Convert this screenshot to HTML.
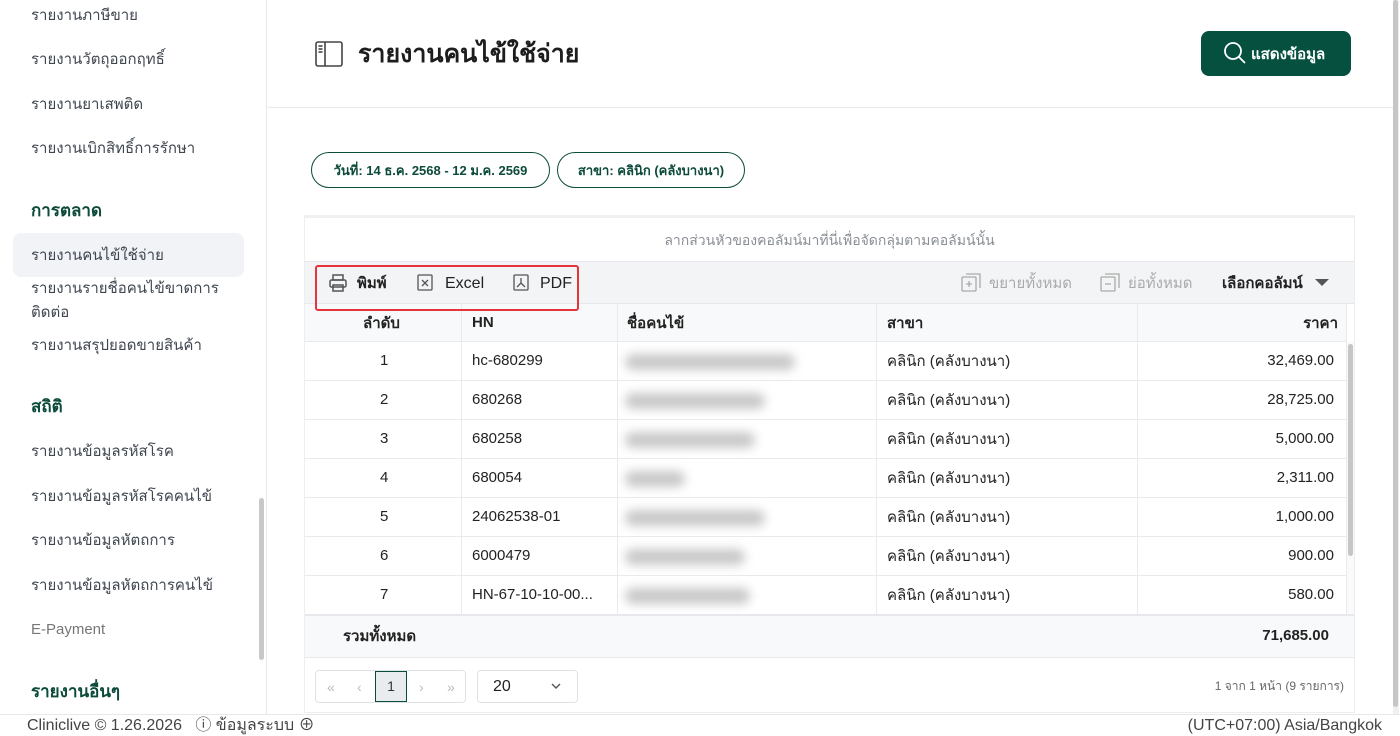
<!DOCTYPE html>
<html><head><meta charset="utf-8"><style>
*{box-sizing:border-box;margin:0;padding:0}
body{width:1400px;height:734px;overflow:hidden;background:#fff;font-family:"Liberation Sans","Noto Sans CJK SC",sans-serif;color:#222;position:relative}
.side{position:absolute;left:0;top:0;width:267px;height:714px;border-right:1px solid #e6e8eb;background:#fff}
.si{position:absolute;left:31px;font-size:15px;color:#3f4650;line-height:20px}
.sh{position:absolute;left:31px;font-size:17px;font-weight:bold;color:#0c4a3a;line-height:20px}
.act{position:absolute;left:13px;top:233px;width:231px;height:44px;background:#f1f3f7;border-radius:8px}
.sscroll{position:absolute;left:259px;top:498px;width:5px;height:162px;background:#c8c8c8;border-radius:3px}
.mscroll{position:absolute;left:1393px;top:0;width:6px;height:714px;background:#f0f0f0}
.mscroll div{position:absolute;left:0;top:0;width:5px;height:707px;background:#c6c6c6;border-radius:3px}
.hdr{position:absolute;left:268px;top:107px;width:1125px;height:1px;background:#e5e8ec}
h1{position:absolute;left:358px;top:39px;font-size:25px;font-weight:bold;color:#1d1d1d;line-height:30px}
.btn{position:absolute;left:1201px;top:31px;width:150px;height:45px;background:#05503f;border-radius:8px;color:#fff;font-size:15px;font-weight:bold}
.chip{position:absolute;top:152px;height:36px;border:1.5px solid #0c4a3a;border-radius:18px;font-size:13px;font-weight:bold;color:#0c4a3a;line-height:36px;text-align:center}
.tbl{position:absolute;left:304px;top:215px;width:1051px;height:498px;border:1px solid #eceef0;border-top:3px solid #eef0f2}
.grp{position:absolute;left:0;top:0;width:1049px;height:43px;text-align:center;line-height:44px;font-size:14px;color:#8a8f95}
.tb{position:absolute;left:0;top:43px;width:1049px;height:43px;background:#f3f4f6;border-top:1px solid #e6e8eb;border-bottom:1px solid #e6e8eb}
.red{position:absolute;left:10px;top:3px;width:264px;height:46px;border:2.5px solid #e5343a;border-radius:3px;z-index:5}
.t{position:absolute;font-size:15px;line-height:18px}
.row{position:absolute;left:0;width:1041px;height:39px;border-bottom:1px solid #e8eaed;font-size:15px;color:#222}
.row span{position:absolute;top:10px;line-height:18px}
.row span.th{top:11px}
.vl{position:absolute;top:86px;width:1px;height:310px;background:#e8eaed}
.blur{position:absolute;top:12px;height:16px;background:#bbb;filter:blur(5px);border-radius:8px;opacity:.8}
.tot{position:absolute;left:0;top:396px;width:1049px;height:44px;background:#f8f9fa;border-top:2px solid #e6e8eb;border-bottom:1px solid #e6e8eb;font-size:15px;font-weight:bold}
.pg{position:absolute;top:452px;height:33px;border:1px solid #dfe2e6;border-radius:4px}
.foot{position:absolute;left:0;top:714px;width:1400px;height:20px;background:#fff;border-top:1px solid #e6e8eb;font-size:16px;color:#444}
</style></head><body>
<div class="side">
<div class="si" style="top:6px">รายงานภาษีขาย</div>
<div class="si" style="top:50px">รายงานวัตถุออกฤทธิ์</div>
<div class="si" style="top:95px">รายงานยาเสพติด</div>
<div class="si" style="top:139px">รายงานเบิกสิทธิ์การรักษา</div>
<div class="sh" style="top:201px">การตลาด</div>
<div class="act"></div>
<div class="si" style="top:246px">รายงานคนไข้ใช้จ่าย</div>
<div class="si" style="top:277px;line-height:24px">รายงานรายชื่อคนไข้ขาดการ<br>ติดต่อ</div>
<div class="si" style="top:336px">รายงานสรุปยอดขายสินค้า</div>
<div class="sh" style="top:397px">สถิติ</div>
<div class="si" style="top:442px">รายงานข้อมูลรหัสโรค</div>
<div class="si" style="top:487px">รายงานข้อมูลรหัสโรคคนไข้</div>
<div class="si" style="top:531px">รายงานข้อมูลหัตถการ</div>
<div class="si" style="top:576px">รายงานข้อมูลหัตถการคนไข้</div>
<div class="si" style="top:620px;color:#777">E-Payment</div>
<div class="sh" style="top:682px">รายงานอื่นๆ</div>
<div class="sscroll"></div>
</div>
<div class="mscroll"><div></div></div>
<svg style="position:absolute;left:315px;top:41px" width="30" height="26" viewBox="0 0 30 26" fill="none" stroke="#444" stroke-width="1.6"><rect x="1" y="1" width="26" height="24" rx="2"/><line x1="10" y1="1" x2="10" y2="25"/><line x1="3.5" y1="5" x2="7.5" y2="5"/><line x1="3.5" y1="8" x2="7.5" y2="8"/><line x1="3.5" y1="11" x2="7.5" y2="11"/></svg>
<h1>รายงานคนไข้ใช้จ่าย</h1>
<div class="btn"><svg style="position:absolute;left:22px;top:10px" width="24" height="24" viewBox="0 0 24 24" fill="none" stroke="#fff" stroke-width="1.8"><circle cx="10" cy="10" r="8"/><line x1="16" y1="16" x2="22" y2="22"/></svg><span style="position:absolute;left:50px;top:14px;line-height:20px">แสดงข้อมูล</span></div>
<div class="hdr"></div>
<div class="chip" style="left:311px;width:239px">วันที่: 14 ธ.ค. 2568 - 12 ม.ค. 2569</div>
<div class="chip" style="left:557px;width:188px">สาขา: คลินิก (คลังบางนา)</div>
<div class="tbl">
<div class="grp">ลากส่วนหัวของคอลัมน์มาที่นี่เพื่อจัดกลุ่มตามคอลัมน์นั้น</div>
<div class="tb">
<div class="red"></div>
<svg style="position:absolute;left:24px;top:12px" width="18" height="18" viewBox="0 0 18 18" fill="none" stroke="#555" stroke-width="1.5"><rect x="4" y="1" width="10" height="5"/><rect x="1" y="6" width="16" height="7" rx="1.5"/><rect x="4" y="11" width="10" height="6"/></svg>
<span class="t" style="left:52px;top:13px;font-weight:bold">พิมพ์</span>
<svg style="position:absolute;left:112px;top:12px" width="16" height="17" viewBox="0 0 16 17" fill="none" stroke="#555" stroke-width="1.3"><rect x="1" y="1" width="14" height="15" rx="1"/><path d="M5 6l6 6M11 6l-6 6"/></svg>
<span class="t" style="left:140px;top:13px;font-size:16px">Excel</span>
<svg style="position:absolute;left:208px;top:12px" width="16" height="17" viewBox="0 0 16 17" fill="none" stroke="#555" stroke-width="1.3"><rect x="1" y="1" width="14" height="15" rx="1"/><path d="M8 4v5l-4 4M8 9l4 4"/></svg>
<span class="t" style="left:235px;top:13px;font-size:16px">PDF</span>
<svg style="position:absolute;left:656px;top:11px" width="20" height="20" viewBox="0 0 20 20" fill="none" stroke="#aaa" stroke-width="1.3"><rect x="1" y="4" width="14" height="14" rx="1"/><path d="M5 1h14v14M8 8v6M5 11h6"/></svg>
<span class="t" style="left:684px;top:13px;color:#aaa">ขยายทั้งหมด</span>
<svg style="position:absolute;left:795px;top:11px" width="20" height="20" viewBox="0 0 20 20" fill="none" stroke="#aaa" stroke-width="1.3"><rect x="1" y="4" width="14" height="14" rx="1"/><path d="M5 1h14v14M5 11h6"/></svg>
<span class="t" style="left:823px;top:13px;color:#aaa">ย่อทั้งหมด</span>
<span class="t" style="left:917px;top:13px;font-weight:bold">เลือกคอลัมน์</span>
<svg style="position:absolute;left:1010px;top:17px" width="14" height="8"><path d="M0 0h14L7 7z" fill="#555"/></svg>
</div>
<div class="row" style="top:86px;height:38px;background:#f8f9fa;font-weight:bold"><span class="th" style="left:58px">ลำดับ</span><span style="left:167px">HN</span><span class="th" style="left:322px">ชื่อคนไข้</span><span class="th" style="left:582px">สาขา</span><span class="th" style="right:8px">ราคา</span></div>
<div class="row" style="top:124px"><span style="left:75px">1</span><span style="left:167px">hc-680299</span><div class="blur" style="left:320px;width:170px"></div><span class="th" style="left:582px">คลินิก (คลังบางนา)</span><span style="right:12px">32,469.00</span></div>
<div class="row" style="top:163px"><span style="left:75px">2</span><span style="left:167px">680268</span><div class="blur" style="left:320px;width:140px"></div><span class="th" style="left:582px">คลินิก (คลังบางนา)</span><span style="right:12px">28,725.00</span></div>
<div class="row" style="top:202px"><span style="left:75px">3</span><span style="left:167px">680258</span><div class="blur" style="left:320px;width:130px"></div><span class="th" style="left:582px">คลินิก (คลังบางนา)</span><span style="right:12px">5,000.00</span></div>
<div class="row" style="top:241px"><span style="left:75px">4</span><span style="left:167px">680054</span><div class="blur" style="left:320px;width:60px"></div><span class="th" style="left:582px">คลินิก (คลังบางนา)</span><span style="right:12px">2,311.00</span></div>
<div class="row" style="top:280px"><span style="left:75px">5</span><span style="left:167px">24062538-01</span><div class="blur" style="left:320px;width:140px"></div><span class="th" style="left:582px">คลินิก (คลังบางนา)</span><span style="right:12px">1,000.00</span></div>
<div class="row" style="top:319px"><span style="left:75px">6</span><span style="left:167px">6000479</span><div class="blur" style="left:320px;width:120px"></div><span class="th" style="left:582px">คลินิก (คลังบางนา)</span><span style="right:12px">900.00</span></div>
<div class="row" style="top:358px"><span style="left:75px">7</span><span style="left:167px">HN-67-10-10-00...</span><div class="blur" style="left:320px;width:125px"></div><span class="th" style="left:582px">คลินิก (คลังบางนา)</span><span style="right:12px">580.00</span></div>
<div class="vl" style="left:156px"></div><div class="vl" style="left:312px"></div><div class="vl" style="left:571px"></div><div class="vl" style="left:832px"></div><div class="vl" style="left:1041px"></div>
<div style="position:absolute;left:1042px;top:124px;width:7px;height:272px;background:#fafafa"><div style="margin-left:1px;margin-top:2px;width:5px;height:212px;background:#c6c6c6;border-radius:3px"></div></div>
<div class="tot"><span style="position:absolute;left:38px;top:12px;line-height:18px">รวมทั้งหมด</span><span style="position:absolute;right:25px;top:11px;line-height:18px">71,685.00</span></div>
<div class="pg" style="left:10px;width:151px;color:#bbb;font-size:14px">
<span style="position:absolute;left:11px;top:8px">«</span><span style="position:absolute;left:41px;top:8px">‹</span>
<div style="position:absolute;left:59px;top:0;width:32px;height:31px;background:#e9ecef;border:1.5px solid #0c4a3a;color:#333;text-align:center;line-height:28px">1</div>
<span style="position:absolute;left:103px;top:8px">›</span><span style="position:absolute;left:131px;top:8px">»</span></div>
<div class="pg" style="left:172px;width:101px;font-size:16px"><span style="position:absolute;left:15px;top:7px">20</span><svg style="position:absolute;left:73px;top:12px" width="10" height="7" fill="none" stroke="#555" stroke-width="1.4"><path d="M1 1l4 4 4-4"/></svg></div>
<span style="position:absolute;right:10px;top:460px;font-size:12px;color:#666;line-height:16px">1 จาก 1 หน้า (9 รายการ)</span>
</div>
<div class="foot"><span style="position:absolute;left:27px;top:1px;line-height:20px">Cliniclive © 1.26.2026 &nbsp; ⓘ ข้อมูลระบบ ⊕</span><span style="position:absolute;right:18px;top:1px;line-height:20px">(UTC+07:00) Asia/Bangkok</span></div>
</body></html>
